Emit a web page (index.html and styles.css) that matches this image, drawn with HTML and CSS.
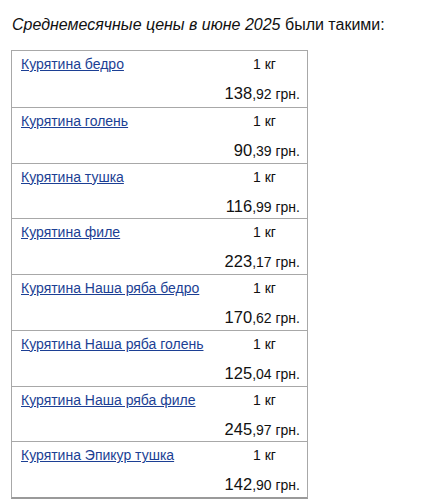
FILE: index.html
```html
<!DOCTYPE html>
<html lang="ru">
<head>
<meta charset="utf-8">
<link rel="stylesheet" href="styles.css">
</head>
<body>
<p class="lead"><em>Среднемесячные цены в июне 2025</em> были такими:</p>
<div class="prices">
  <div class="row">
    <a class="name" href="#">Курятина бедро</a>
    <span class="unit">1 кг</span>
    <span class="price"><span class="int">138</span>,92 грн.</span>
  </div>
  <div class="row">
    <a class="name" href="#">Курятина голень</a>
    <span class="unit">1 кг</span>
    <span class="price"><span class="int">90</span>,39 грн.</span>
  </div>
  <div class="row">
    <a class="name" href="#">Курятина тушка</a>
    <span class="unit">1 кг</span>
    <span class="price"><span class="int">116</span>,99 грн.</span>
  </div>
  <div class="row">
    <a class="name" href="#">Курятина филе</a>
    <span class="unit">1 кг</span>
    <span class="price"><span class="int">223</span>,17 грн.</span>
  </div>
  <div class="row">
    <a class="name" href="#">Курятина Наша ряба бедро</a>
    <span class="unit">1 кг</span>
    <span class="price"><span class="int">170</span>,62 грн.</span>
  </div>
  <div class="row">
    <a class="name" href="#">Курятина Наша ряба голень</a>
    <span class="unit">1 кг</span>
    <span class="price"><span class="int">125</span>,04 грн.</span>
  </div>
  <div class="row">
    <a class="name" href="#">Курятина Наша ряба филе</a>
    <span class="unit">1 кг</span>
    <span class="price"><span class="int">245</span>,97 грн.</span>
  </div>
  <div class="row">
    <a class="name" href="#">Курятина Эпикур тушка</a>
    <span class="unit">1 кг</span>
    <span class="price"><span class="int">142</span>,90 грн.</span>
  </div>
</div>
</body>
</html>
```
FILE: styles.css
```css
html, body {
  margin: 0;
  padding: 0;
  background: #fff;
}
body {
  font-family: "Liberation Sans", Arial, sans-serif;
  color: #111;
  padding: 15px 12px 0 11px;
}
.lead {
  margin: 0 0 15px 1px;
  font-size: 16px;
  line-height: 20px;
}
.prices {
  width: 295px;
  border: 1px solid #a8a8a8;
  border-bottom: 2px solid #9a9a9a;
}
.row {
  display: grid;
  grid-template-columns: 1fr 74px;
  grid-template-rows: 20px 24px;
  row-gap: 7px;
  padding: 3px 7px 1px 9px;
  height: 55.75px;
  box-sizing: border-box;
  border-top: 1px solid #a8a8a8;
}
.row:first-child {
  border-top: none;
}
.name {
  grid-column: 1;
  grid-row: 1;
  font-size: 14px;
  line-height: 20px;
  color: #1c3f94;
  text-decoration: underline;
  white-space: nowrap;
}
.unit {
  grid-column: 2;
  grid-row: 1;
  font-size: 14px;
  line-height: 20px;
  text-align: center;
  padding-left: 3px;
}
.price {
  grid-column: 1 / 3;
  grid-row: 2;
  text-align: right;
  font-size: 14px;
  line-height: 24px;
}
.price .int {
  font-size: 16.5px;
}
```
